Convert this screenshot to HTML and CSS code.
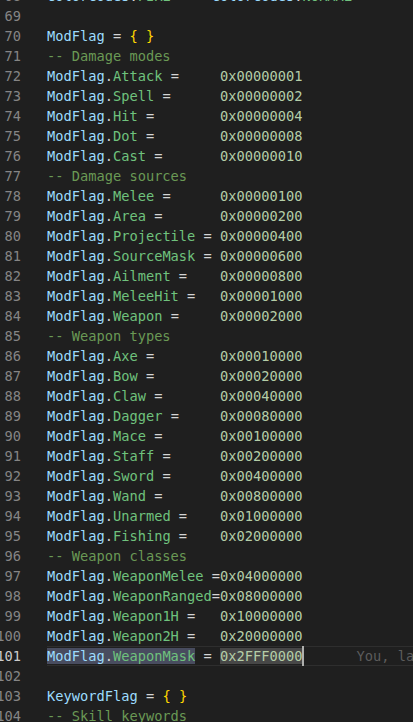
FILE: index.html
```html
<!DOCTYPE html>
<html>
<head>
<meta charset="utf-8">
<link rel="stylesheet" href="styles.css">
</head>
<body>
<div class="editor">
<div class="line"><span class="num">68</span><span class="code"><span class="v">ColorCodes</span>.<span class="p">FIRE</span>   <span class="o">=</span> <span class="v">ColorCodes</span>.<span class="p">NORMAL</span></span></div>
<div class="line"><span class="num">69</span><span class="code"></span></div>
<div class="line"><span class="num">70</span><span class="code"><span class="v">ModFlag</span> = <span class="b">{</span> <span class="b">}</span></span></div>
<div class="line"><span class="num">71</span><span class="code"><span class="c">-- Damage modes</span></span></div>
<div class="line"><span class="num">72</span><span class="code"><span class="v">ModFlag</span>.<span class="p">Attack</span> =     <span class="n">0x00000001</span></span></div>
<div class="line"><span class="num">73</span><span class="code"><span class="v">ModFlag</span>.<span class="p">Spell</span> =      <span class="n">0x00000002</span></span></div>
<div class="line"><span class="num">74</span><span class="code"><span class="v">ModFlag</span>.<span class="p">Hit</span> =        <span class="n">0x00000004</span></span></div>
<div class="line"><span class="num">75</span><span class="code"><span class="v">ModFlag</span>.<span class="p">Dot</span> =        <span class="n">0x00000008</span></span></div>
<div class="line"><span class="num">76</span><span class="code"><span class="v">ModFlag</span>.<span class="p">Cast</span> =       <span class="n">0x00000010</span></span></div>
<div class="line"><span class="num">77</span><span class="code"><span class="c">-- Damage sources</span></span></div>
<div class="line"><span class="num">78</span><span class="code"><span class="v">ModFlag</span>.<span class="p">Melee</span> =      <span class="n">0x00000100</span></span></div>
<div class="line"><span class="num">79</span><span class="code"><span class="v">ModFlag</span>.<span class="p">Area</span> =       <span class="n">0x00000200</span></span></div>
<div class="line"><span class="num">80</span><span class="code"><span class="v">ModFlag</span>.<span class="p">Projectile</span> = <span class="n">0x00000400</span></span></div>
<div class="line"><span class="num">81</span><span class="code"><span class="v">ModFlag</span>.<span class="p">SourceMask</span> = <span class="n">0x00000600</span></span></div>
<div class="line"><span class="num">82</span><span class="code"><span class="v">ModFlag</span>.<span class="p">Ailment</span> =    <span class="n">0x00000800</span></span></div>
<div class="line"><span class="num">83</span><span class="code"><span class="v">ModFlag</span>.<span class="p">MeleeHit</span> =   <span class="n">0x00001000</span></span></div>
<div class="line"><span class="num">84</span><span class="code"><span class="v">ModFlag</span>.<span class="p">Weapon</span> =     <span class="n">0x00002000</span></span></div>
<div class="line"><span class="num">85</span><span class="code"><span class="c">-- Weapon types</span></span></div>
<div class="line"><span class="num">86</span><span class="code"><span class="v">ModFlag</span>.<span class="p">Axe</span> =        <span class="n">0x00010000</span></span></div>
<div class="line"><span class="num">87</span><span class="code"><span class="v">ModFlag</span>.<span class="p">Bow</span> =        <span class="n">0x00020000</span></span></div>
<div class="line"><span class="num">88</span><span class="code"><span class="v">ModFlag</span>.<span class="p">Claw</span> =       <span class="n">0x00040000</span></span></div>
<div class="line"><span class="num">89</span><span class="code"><span class="v">ModFlag</span>.<span class="p">Dagger</span> =     <span class="n">0x00080000</span></span></div>
<div class="line"><span class="num">90</span><span class="code"><span class="v">ModFlag</span>.<span class="p">Mace</span> =       <span class="n">0x00100000</span></span></div>
<div class="line"><span class="num">91</span><span class="code"><span class="v">ModFlag</span>.<span class="p">Staff</span> =      <span class="n">0x00200000</span></span></div>
<div class="line"><span class="num">92</span><span class="code"><span class="v">ModFlag</span>.<span class="p">Sword</span> =      <span class="n">0x00400000</span></span></div>
<div class="line"><span class="num">93</span><span class="code"><span class="v">ModFlag</span>.<span class="p">Wand</span> =       <span class="n">0x00800000</span></span></div>
<div class="line"><span class="num">94</span><span class="code"><span class="v">ModFlag</span>.<span class="p">Unarmed</span> =    <span class="n">0x01000000</span></span></div>
<div class="line"><span class="num">95</span><span class="code"><span class="v">ModFlag</span>.<span class="p">Fishing</span> =    <span class="n">0x02000000</span></span></div>
<div class="line"><span class="num">96</span><span class="code"><span class="c">-- Weapon classes</span></span></div>
<div class="line"><span class="num">97</span><span class="code"><span class="v">ModFlag</span>.<span class="p">WeaponMelee</span> =<span class="n">0x04000000</span></span></div>
<div class="line"><span class="num">98</span><span class="code"><span class="v">ModFlag</span>.<span class="p">WeaponRanged</span>=<span class="n">0x08000000</span></span></div>
<div class="line"><span class="num">99</span><span class="code"><span class="v">ModFlag</span>.<span class="p">Weapon1H</span> =   <span class="n">0x10000000</span></span></div>
<div class="line"><span class="num">100</span><span class="code"><span class="v">ModFlag</span>.<span class="p">Weapon2H</span> =   <span class="n">0x20000000</span></span></div>
<div class="line current"><span class="num">101</span><span class="code"><span class="sel"><span class="v">ModFlag</span>.<span class="p">WeaponMask</span></span> = <span class="hl"><span class="n">0x2FFF0000</span></span><span class="cursor"></span><span class="blame">You, last week • Uncommitted changes</span></span></div>
<div class="line"><span class="num">102</span><span class="code"></span></div>
<div class="line"><span class="num">103</span><span class="code"><span class="v">KeywordFlag</span> = <span class="b">{</span> <span class="b">}</span></span></div>
<div class="line"><span class="num">104</span><span class="code"><span class="c">-- Skill keywords</span></span></div>
</div>
</body>
</html>
```
FILE: styles.css
```css
html, body {
  margin: 0;
  padding: 0;
  background: #1f1f1f;
  overflow: hidden;
  height: 722px;
}
.editor {
  margin-top: -14px;
  font-family: "DejaVu Sans Mono", "Liberation Mono", monospace;
  font-size: 13.7px;
}
.line {
  display: flex;
  height: 20px;
  line-height: 20px;
  white-space: pre;
}
.num {
  flex: none;
  width: 21px;
  text-align: right;
  color: #858585;
  overflow: visible;
  direction: rtl;
}
.code {
  display: block;
  flex: 1;
  margin-left: 26px;
  color: #d4d4d4;
  min-width: 0;
  height: 20px;
  overflow: hidden;
  white-space: pre;
}
.current .num {
  color: #cccccc;
}
.current .code {
  box-shadow: inset 0 1px #2e2e2e, inset 0 -1px #2e2e2e;
}
.v { color: #9cdcfe; }
.p { color: #6fc27d; }
.n { color: #b5cea8; }
.c { color: #6a9955; }
.b { color: #ffd700; }
.o { color: #d4d4d4; }
.sel {
  background: #484c5f;
}
.hl {
  background: #474747;
}
.cursor {
  display: inline-block;
  vertical-align: top;
  width: 2px;
  height: 20px;
  background: #aeafad;
}
.blame {
  margin-left: 52px;
  color: #5c5c5c;
}
```
